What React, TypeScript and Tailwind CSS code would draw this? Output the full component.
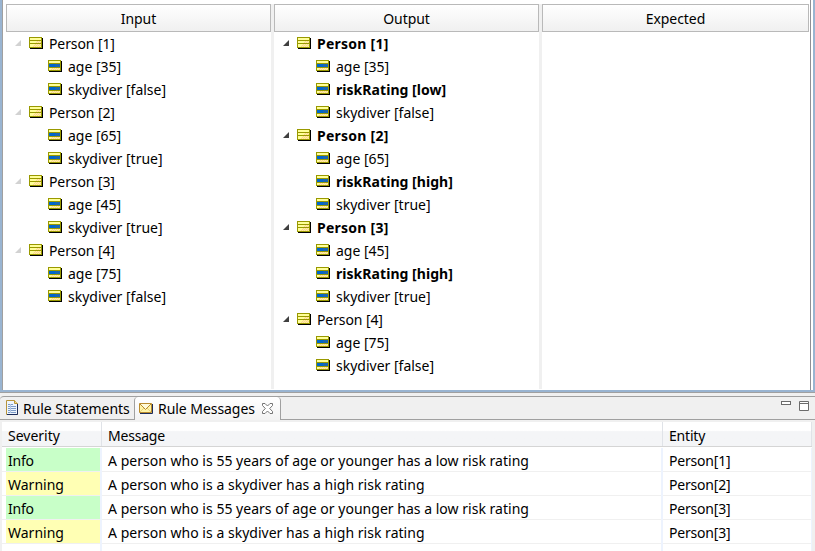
import React from "react";

type Node = { label: string; bold?: boolean; child?: boolean };

const input: Node[] = [
  { label: "Person [1]" },
  { label: "age [35]", child: true },
  { label: "skydiver [false]", child: true },
  { label: "Person [2]" },
  { label: "age [65]", child: true },
  { label: "skydiver [true]", child: true },
  { label: "Person [3]" },
  { label: "age [45]", child: true },
  { label: "skydiver [true]", child: true },
  { label: "Person [4]" },
  { label: "age [75]", child: true },
  { label: "skydiver [false]", child: true },
];

const output: Node[] = [
  { label: "Person [1]", bold: true },
  { label: "age [35]", child: true },
  { label: "riskRating [low]", child: true, bold: true },
  { label: "skydiver [false]", child: true },
  { label: "Person [2]", bold: true },
  { label: "age [65]", child: true },
  { label: "riskRating [high]", child: true, bold: true },
  { label: "skydiver [true]", child: true },
  { label: "Person [3]", bold: true },
  { label: "age [45]", child: true },
  { label: "riskRating [high]", child: true, bold: true },
  { label: "skydiver [true]", child: true },
  { label: "Person [4]" },
  { label: "age [75]", child: true },
  { label: "skydiver [false]", child: true },
];

const messages = [
  { severity: "Info", text: "A person who is 55 years of age or younger has a low risk rating", entity: "Person[1]" },
  { severity: "Warning", text: "A person who is a skydiver has a high risk rating", entity: "Person[2]" },
  { severity: "Info", text: "A person who is 55 years of age or younger has a low risk rating", entity: "Person[3]" },
  { severity: "Warning", text: "A person who is a skydiver has a high risk rating", entity: "Person[3]" },
];

function Dither({ points }: { points: number[][] }) {
  return (
    <>
      {points.map(([x, y]) => (
        <rect key={`${x}-${y}`} x={x} y={y} width="1" height="1" />
      ))}
    </>
  );
}

function EntityIcon() {
  return (
    <svg width="14" height="12" className="mb-px shrink-0" shapeRendering="crispEdges">
      <rect x="1" y="1" width="13" height="11" fill="#000" />
      <rect width="13" height="11" fill="#999900" />
      <rect x="1" y="1" width="11" height="2" fill="#ffff99" />
      <rect x="1" y="4" width="11" height="2" fill="#ffff99" />
      <rect x="1" y="7" width="11" height="3" fill="#ffff99" />
      <g fill="#ffcc99">
        <Dither points={[[8, 4], [10, 4], [7, 5], [9, 5], [11, 5], [6, 7], [8, 7], [10, 7], [5, 8], [7, 8], [9, 8], [11, 8], [4, 9], [6, 9], [8, 9], [10, 9]]} />
      </g>
    </svg>
  );
}

function AttributeIcon() {
  return (
    <svg width="14" height="12" className="mb-px shrink-0" shapeRendering="crispEdges">
      <rect x="1" y="1" width="13" height="11" fill="#000" />
      <rect width="13" height="11" fill="#999900" />
      <rect x="1" y="1" width="11" height="2" fill="#ffff99" />
      <rect x="1" y="4" width="11" height="3" fill="#0066cc" />
      <rect x="1" y="8" width="11" height="2" fill="#ffff99" />
      <g fill="#336699">
        <Dither points={[[8, 4], [10, 4], [7, 5], [9, 5], [11, 5], [8, 6], [10, 6]]} />
      </g>
      <g fill="#ffcc99">
        <Dither points={[[4, 8], [6, 8], [8, 8], [10, 8], [3, 9], [5, 9], [7, 9], [9, 9], [11, 9]]} />
      </g>
    </svg>
  );
}

function labelClass(n: Node) {
  if (n.bold) return n.child ? "ml-1.5 font-bold tracking-[0.05px]" : "ml-1.5 font-bold tracking-[0.25px]";
  return n.child ? "ml-1.5 tracking-[0px]" : "ml-1.5 tracking-[-0.1px]";
}

function Tree({ title, nodes, dark, pad }: { title: string; nodes: Node[]; dark?: boolean; pad: string }) {
  return (
    <div className="flex h-full min-w-0 flex-col">
      <div className="flex h-7 shrink-0 items-center justify-center border border-[#b9b9b9] bg-linear-to-b from-white to-[#f0f0f0] pt-0.5">
        <span className="tracking-[-0.05px]">{title}</span>
      </div>
      <div className={pad}>
        {nodes.map((n, i) => (
          <div key={i} className={n.child ? "flex h-[23px] items-center pl-[33px]" : "flex h-[23px] items-center"}>
            {!n.child && (
              <svg width="6" height="6" className="mr-2 mb-px shrink-0" viewBox="0 0 6 6">
                <path d="M6 0V6H0Z" fill={dark ? "#404040" : "#d2d2d2"} />
              </svg>
            )}
            {n.child ? <AttributeIcon /> : <EntityIcon />}
            <span className={labelClass(n)}>{n.label}</span>
          </div>
        ))}
      </div>
    </div>
  );
}

function DocumentIcon() {
  return (
    <svg width="13" height="16" viewBox="0 0 13 16" className="mb-px shrink-0">
      <path d="M.5 .5H8.5L11.5 3.5V14.5H.5Z" fill="#eef5fd" stroke="#b8953c" />
      <path d="M8.5 .5V3.5H11.5" fill="#f1d98a" stroke="#b8953c" />
      <path d="M11.5 4V14.5H1" fill="none" stroke="#1c2d5c" />
      <path d="M2 4.5H7M2 6.5H10M2 8.5H10M2 10.5H10M2 12.5H10" stroke="#7d9cc8" />
      <path d="M4.5 4V13" stroke="#b3c8e4" />
    </svg>
  );
}

function MailIcon() {
  return (
    <svg width="14" height="11" viewBox="0 0 14 11" className="shrink-0">
      <path d="M.5 .5H12.5V9.5H.5Z" fill="#fff5a8" stroke="#b98b2d" />
      <path d="M1 9L5 5M12 9L8 5" stroke="#ead27c" fill="none" />
      <path d="M1 1L6.5 6.5L12 1" fill="#fffbd9" stroke="#b98b2d" />
      <path d="M13.5 1V10.5H1" fill="none" stroke="#1c2d5c" />
    </svg>
  );
}

function CloseIcon() {
  return (
    <svg width="11" height="11" viewBox="0 0 11 11" className="shrink-0">
      <path d="M.5 .5H3L5.5 3L8 .5H10.5V2.5L7.7 5.5L10.5 8.5V10.5H8L5.5 8L3 10.5H.5V8.5L3.3 5.5L.5 2.5Z" fill="#fff" stroke="#666" strokeWidth=".9" />
    </svg>
  );
}

export default function App() {
  return (
    <div className="flex h-[551px] w-[815px] flex-col overflow-hidden bg-[#f0f0f0] font-['Noto_Sans','Open_Sans',sans-serif] text-[14px] leading-5 tracking-[-0.2px] whitespace-nowrap text-black">
      <div className="h-[393px] shrink-0 border-b border-[#a0a0a0]">
        <div className="flex h-full border-x-2 border-b-2 border-[#99b4d1]">
          <div className="flex w-[809px] shrink-0 border-x border-l-[#a0a0a0] border-r-[#8e8f96] bg-white pt-1 pr-px pb-px pl-[3px]">
            <div className="grid w-full grid-cols-[265px_3px_265px_3px_267px]">
              <Tree title="Input" nodes={input} pad="pl-[9px]" />
              <div className="bg-[#f0f0f0]" />
              <Tree title="Output" nodes={output} dark pad="pl-[9px]" />
              <div className="bg-[#f0f0f0]" />
              <Tree title="Expected" nodes={[]} pad="" />
            </div>
          </div>
          <div className="grow bg-white" />
        </div>
      </div>

      <div className="mt-[3px] flex h-6 shrink-0 rounded-tl border-t border-[#a0a0a0]">
        <div className="flex w-[134px] items-center border-b border-[#a0a0a0] pl-1.5">
          <DocumentIcon />
          <span className="ml-1 pt-px tracking-[-0.05px]">Rule Statements</span>
        </div>
        <div className="flex w-[147px] items-center rounded-t border-x border-[#a0a0a0] bg-linear-to-b from-white to-[#f3f3f3] pl-1">
          <MailIcon />
          <span className="ml-[5px] tracking-[-0.05px]">Rule Messages</span>
          <span className="mr-[7px] ml-auto"><CloseIcon /></span>
        </div>
        <div className="flex grow justify-end gap-2 border-b border-[#a0a0a0] pr-1.5">
          <svg width="10" height="4" className="mt-1"><rect x=".5" y=".5" width="9" height="3" fill="#fff" stroke="#6b6b6b" /></svg>
          <svg width="10" height="10" className="mt-1"><path d="M.5 .5H9.5V9.5H.5ZM0 2.5H10" fill="#fff" stroke="#6b6b6b" /></svg>
        </div>
      </div>

      <div className="mt-0.5 ml-0.5 w-[810px] grow bg-white">
        <div className="grid h-[25px] grid-cols-[100px_561px_149px] border-b border-[#d5d5d5] bg-linear-to-b from-white from-35% to-[#f4f5f7] to-40%">
          <div className="flex items-center border-r border-[#e0e3e8] pt-1 pl-1.5 tracking-[0px]">Severity</div>
          <div className="flex items-center border-r border-[#e0e3e8] pt-1 pl-1.5">Message</div>
          <div className="flex items-center border-r border-[#e0e3e8] pt-1 pl-1.5">Entity</div>
        </div>
        <div className="flex h-[104px] flex-col pt-px">
          {messages.map((m, i) => (
            <div key={i} className="grid h-6 shrink-0 grid-cols-[98px_2px_559px_2px_148px_1px] border-b border-[#f0f0f0]">
              <div className={m.severity === "Info" ? "ml-1 flex items-center bg-[#c8ffc8] pt-0.5 pl-0.5" : "ml-1 flex items-center bg-[#ffffb4] pt-0.5 pl-0.5 tracking-[0px]"}>{m.severity}</div>
              <div className="-mb-px bg-[#edf3fe]" />
              <div className="flex items-center pt-0.5 pl-1.5 tracking-[0.02px]">{m.text}</div>
              <div className="-mb-px bg-[#edf3fe]" />
              <div className="flex items-center pt-0.5 pl-1.5">{m.entity}</div>
              <div className="-mb-px bg-[#edf3fe]" />
            </div>
          ))}
          <div className="grid grow grid-cols-[98px_2px_559px_2px_148px_1px]">
            <div />
            <div className="bg-[#edf3fe]" />
            <div />
            <div className="bg-[#edf3fe]" />
            <div />
            <div className="bg-[#edf3fe]" />
          </div>
        </div>
      </div>
    </div>
  );
}
